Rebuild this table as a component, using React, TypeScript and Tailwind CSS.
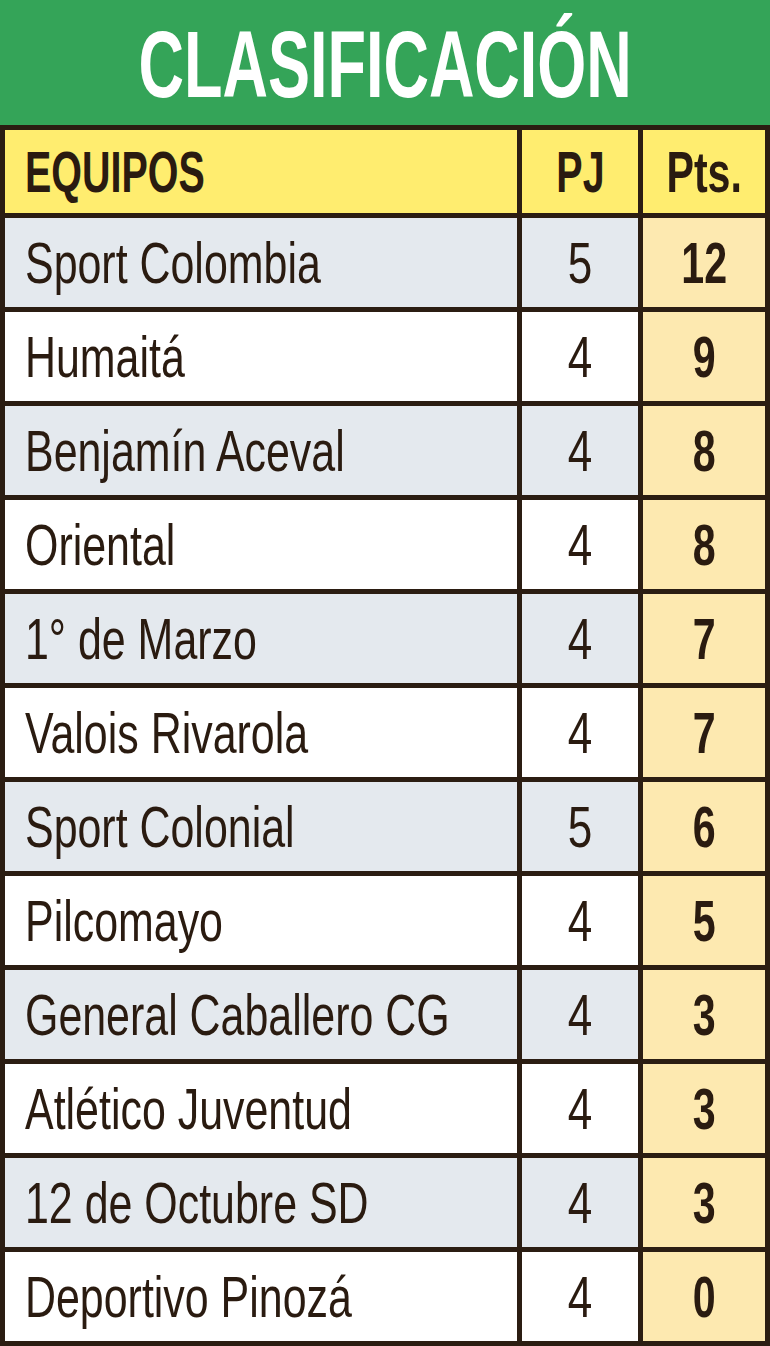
const teams: [string, number, number][] = [
  ['Sport Colombia', 5, 12],
  ['Humaitá', 4, 9],
  ['Benjamín Aceval', 4, 8],
  ['Oriental', 4, 8],
  ['1° de Marzo', 4, 7],
  ['Valois Rivarola', 4, 7],
  ['Sport Colonial', 5, 6],
  ['Pilcomayo', 4, 5],
  ['General Caballero CG', 4, 3],
  ['Atlético Juventud', 4, 3],
  ['12 de Octubre SD', 4, 3],
  ['Deportivo Pinozá', 4, 0],
];

// condensed face isn't installed, so text is squeezed with scale-x
const font = "font-['Liberation_Sans',Arial,sans-serif]";

export default function App() {
  return (
    <div className={`w-[770px] h-[1346px] bg-white text-[#2a1b10] ${font}`}>
      <div className="h-[125px] bg-[#34a458] flex items-center justify-center">
        <span className="inline-block text-white font-bold text-[94px] leading-none scale-x-[0.67] pt-[5px] whitespace-nowrap">
          CLASIFICACIÓN
        </span>
      </div>

      <div className="border-[5px] border-[#2b1d12] border-b-0">
        {/* header row */}
        <div className="flex h-[88px] border-b-[5px] border-[#2b1d12] bg-[#ffed6f] font-bold text-[58px]">
          <div className="w-[512px] flex items-center pl-[20px]">
            <span className="inline-block origin-left scale-x-[0.68] leading-none">EQUIPOS</span>
          </div>
          <div className="w-[121px] border-l-[5px] border-[#2b1d12] flex items-center justify-center">
            <span className="inline-block scale-x-[0.68] leading-none">PJ</span>
          </div>
          <div className="flex-1 border-l-[5px] border-[#2b1d12] flex items-center justify-center">
            <span className="inline-block scale-x-[0.71] leading-none">Pts.</span>
          </div>
        </div>

        {teams.map(([name, pj, pts], i) => (
          <div
            key={name}
            className={`flex h-[94px] border-b-[5px] border-[#2b1d12] text-[58px] ${
              i % 2 === 0 ? 'bg-[#e4e9ee]' : 'bg-white'
            }`}
          >
            <div className="w-[512px] flex items-center pl-[20px] overflow-hidden">
              <span className="inline-block origin-left scale-x-[0.74] leading-none whitespace-nowrap">{name}</span>
            </div>
            <div className="w-[121px] border-l-[5px] border-[#2b1d12] flex items-center justify-center">
              <span className="inline-block scale-x-[0.76] leading-none">{pj}</span>
            </div>
            <div className="flex-1 border-l-[5px] border-[#2b1d12] bg-[#fde9b0] flex items-center justify-center font-bold">
              <span className="inline-block scale-x-[0.71] leading-none">{pts}</span>
            </div>
          </div>
        ))}
      </div>
    </div>
  );
}
